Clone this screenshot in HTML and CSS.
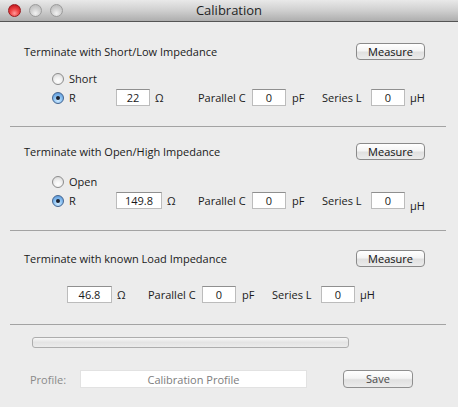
FILE: index.html
```html
<!DOCTYPE html>
<html>
<head>
<meta charset="utf-8">
<link rel="stylesheet" href="styles.css">
</head>
<body>
<div class="window">
  <div class="titlebar">
    <div class="lights">
      <span class="light close"></span>
      <span class="light"></span>
      <span class="light"></span>
    </div>
    <div class="title">Calibration</div>
    <div></div>
  </div>

  <div class="group g1">
    <div class="head">
      <span class="gtitle">Terminate with Short/Low Impedance</span>
      <button class="btn">Measure</button>
    </div>
    <div class="opts o1">
      <div class="row">
        <label class="radio-item"><span class="radio"></span>Short</label>
      </div>
      <div class="row">
        <label class="radio-item"><span class="radio on"></span>R</label>
        <div class="rcell"><span class="field w34">22</span><span class="unit ohm">Ω</span></div>
        <div class="params">
          <span class="plabel">Parallel C</span>
          <span class="field w34">0</span>
          <span class="unit pf">pF</span>
          <span class="slabel">Series L</span>
          <span class="field w34">0</span>
          <span class="unit uh">µH</span>
        </div>
      </div>
    </div>
  </div>

  <div class="group g2">
    <div class="head">
      <span class="gtitle">Terminate with Open/High Impedance</span>
      <button class="btn">Measure</button>
    </div>
    <div class="opts o2">
      <div class="row">
        <label class="radio-item"><span class="radio"></span>Open</label>
      </div>
      <div class="row">
        <label class="radio-item"><span class="radio on"></span>R</label>
        <div class="rcell"><span class="field w46">149.8</span><span class="unit ohm">Ω</span></div>
        <div class="params">
          <span class="plabel">Parallel C</span>
          <span class="field w34">0</span>
          <span class="unit pf">pF</span>
          <span class="slabel">Series L</span>
          <span class="field w34">0</span>
          <span class="unit uh low">µH</span>
        </div>
      </div>
    </div>
  </div>

  <div class="group g3">
    <div class="head">
      <span class="gtitle">Terminate with known Load Impedance</span>
      <button class="btn">Measure</button>
    </div>
    <div class="opts o3">
      <div class="row load">
        <div class="rcell lcell"><span class="field w45">46.8</span><span class="unit ohm">Ω</span></div>
        <div class="params">
          <span class="plabel">Parallel C</span>
          <span class="field w34">0</span>
          <span class="unit pf">pF</span>
          <span class="slabel">Series L</span>
          <span class="field w34">0</span>
          <span class="unit uh">µH</span>
        </div>
      </div>
    </div>
  </div>

  <div class="progress"></div>

  <div class="profile">
    <span class="plabel-profile">Profile:</span>
    <span class="pfield">Calibration Profile</span>
    <button class="btn save">Save</button>
  </div>
</div>
</body>
</html>
```

FILE: styles.css
```css
html, body {
  margin: 0;
  padding: 0;
}
body {
  width: 458px;
  height: 407px;
  overflow: hidden;
  background: #ececec;
  font-family: "Open Sans", "DejaVu Sans", sans-serif;
  font-size: 11px;
  color: #1a1a1a;
}
.window {
  width: 458px;
  height: 407px;
  background: #ececec;
}
.titlebar {
  height: 21px;
  border-bottom: 1px solid #555;
  background: linear-gradient(#e9e9e9, #cfcfcf 50%, #aeaeae);
  display: grid;
  grid-template-columns: 1fr auto 1fr;
  align-items: center;
}
.lights {
  display: flex;
  gap: 8px;
  padding-left: 8px;
}
.light {
  width: 13px;
  height: 13px;
  box-sizing: border-box;
  border-radius: 50%;
  border: 1px solid #9b9b9b;
  background: radial-gradient(circle at 50% 75%, #f2f2f2 0%, #d2d2d2 45%, #b4b4b4 100%);
}
.light.close {
  border-color: #9a1a1e;
  background: radial-gradient(circle at 50% 75%, #ff9a9a 0%, #f04848 40%, #c81c22 80%, #a9141a 100%);
}
.title {
  font-size: 13px;
  color: #1f1f1f;
  line-height: 21px;
}
.group {
  margin: 0 12px 0 10px;
  padding: 0 21px 0 14px;
  border-bottom: 1px solid #a3a3a3;
}
.g1 { padding-top: 21px; padding-bottom: 19px; }
.g2 { padding-top: 16px; padding-bottom: 20px; }
.g3 { padding-top: 19px; padding-bottom: 20px; }
.head {
  display: flex;
  justify-content: space-between;
  align-items: center;
  height: 17px;
}
.gtitle {
  line-height: 15px;
}
.btn {
  font-family: inherit;
  font-size: 11px;
  color: #111;
  width: 69px;
  height: 17px;
  padding: 0;
  box-sizing: border-box;
  border: 1px solid #8a8a8a;
  border-radius: 4px;
  background: linear-gradient(#ffffff 0%, #f4f4f4 45%, #e0e0e0 55%, #ececec 100%);
  line-height: 14px;
}
.o1 { margin-top: 9px; }
.o2 { margin-top: 12px; }
.o3 { margin-top: 18px; }
.row {
  display: flex;
  align-items: center;
  height: 19px;
  padding-left: 28px;
}
.row.load {
  padding-left: 43px;
}
.radio-item {
  width: 64px;
  display: flex;
  align-items: center;
  gap: 5px;
}
.radio {
  width: 12px;
  height: 12px;
  box-sizing: border-box;
  border-radius: 50%;
  border: 1px solid #8c8c8c;
  background: radial-gradient(circle at 50% 70%, #ffffff 0%, #f2f2f2 40%, #d0d0d0 100%);
  display: flex;
  align-items: center;
  justify-content: center;
}
.radio.on {
  border-color: #43648f;
  background: radial-gradient(circle at 50% 75%, #d4ecff 0%, #8cc2f2 45%, #4d8ad0 100%);
}
.radio.on::after {
  content: "";
  width: 4px;
  height: 4px;
  border-radius: 50%;
  background: #1c2230;
}
.rcell {
  width: 82px;
  display: flex;
  align-items: center;
}
.rcell.lcell {
  width: 81px;
}
.field {
  height: 17px;
  box-sizing: border-box;
  background: #fff;
  border: 1px solid #bcbcbc;
  border-top-color: #8f8f8f;
  display: inline-flex;
  align-items: center;
  justify-content: center;
  line-height: 15px;
}
.w34 { width: 34px; }
.w45 { width: 45px; }
.w46 { width: 46px; }
.unit.ohm { margin-left: 5px; }
.params {
  display: flex;
  align-items: center;
}
.plabel { width: 54px; }
.slabel { width: 49px; }
.unit.pf { width: 30px; padding-left: 6px; }
.unit.uh { padding-left: 5px; }
.unit.low { margin-top: 9px; }
.progress {
  margin: 12px 0 0 32px;
  width: 317px;
  height: 11px;
  box-sizing: border-box;
  border: 1px solid #adadad;
  border-radius: 3px;
  background: linear-gradient(#f7f7f7, #e4e4e4 50%, #ececec);
}
.profile {
  margin-top: 22px;
  display: flex;
  align-items: center;
  height: 18px;
  padding-left: 30px;
}
.plabel-profile {
  width: 50px;
  color: #8a8a8a;
}
.pfield {
  width: 227px;
  height: 18px;
  box-sizing: border-box;
  background: #fff;
  border: 1px solid #e2e2e2;
  color: #7d7d7d;
  display: flex;
  align-items: center;
  justify-content: center;
}
.btn.save {
  margin-left: 36px;
  width: 70px;
  height: 18px;
  border-color: #8f8f8f;
  color: #4a4a4a;
}
```
